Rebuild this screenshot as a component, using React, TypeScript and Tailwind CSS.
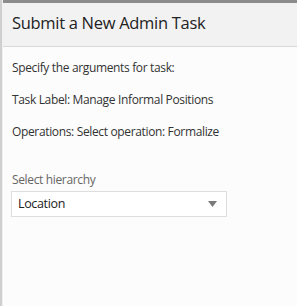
import * as React from "react"

const App = () => {
  return (
    <div className="h-[306px] w-[297px] overflow-hidden bg-[#fcfcfc] font-['Open_Sans',sans-serif] text-[#333]">
      <div className="flex h-full border-l-2 border-[#cfcfcf]">
        <div className="flex flex-1 flex-col border-l border-[#f0f0f0]">
          <div className="h-[3px] bg-[#8c8c8c]"></div>
          <header className="flex h-[44px] items-center border-b border-[#d9d9d9] bg-[#f2f2f2] pl-[9px] pb-[2px]">
            <h1 className="text-[16.5px] leading-none tracking-[-0.3px] text-[#222]">Submit a New Admin Task</h1>
          </header>
          <section className="flex flex-col pl-[9px] pt-[5px] text-[12px] tracking-[-0.35px]">
            <p className="leading-[32px]">Specify the arguments for task:</p>
            <p className="leading-[32px]">Task Label: Manage Informal Positions</p>
            <p className="leading-[32px]">Operations: Select operation: Formalize</p>
            <label className="mt-[24px] mb-[3px] text-[12px] leading-[16px] text-[#666]">Select hierarchy</label>
            <div className="-ml-px flex h-[26px] w-[216px] items-center justify-between border border-[#dedede] bg-white pl-[6px] pr-[9px]">
              <span className="text-[12.5px] text-[#222]">Location</span>
              <svg width="9" height="6" viewBox="0 0 9 6">
                <path d="M0 0 L9 0 L4.5 6 Z" fill="#7a7a7a" />
              </svg>
            </div>
          </section>
        </div>
      </div>
    </div>
  )
}

export default App
